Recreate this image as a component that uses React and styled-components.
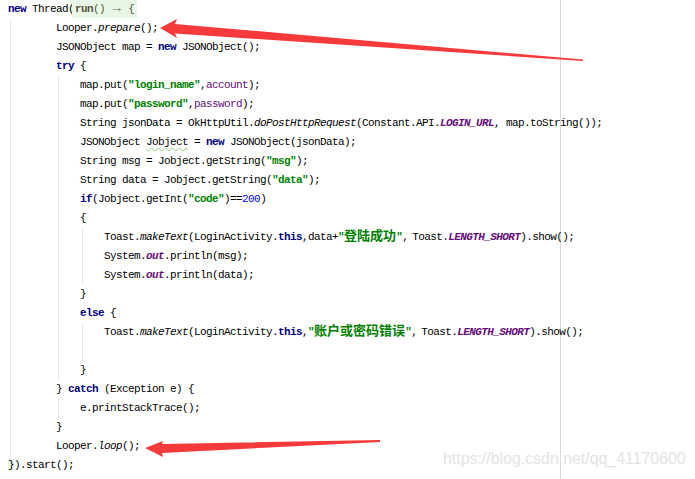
import React from "react";
import styled, { createGlobalStyle } from "styled-components";

const Global = createGlobalStyle`
  html, body {
    margin: 0;
    padding: 0;
    background: #fff;
  }
`;

const Editor = styled.div`
  position: relative;
  width: 695px;
  height: 479px;
  overflow: hidden;
  padding-left: 8px;
  box-sizing: border-box;
  font-family: "Liberation Mono", "DejaVu Sans Mono", monospace;
  font-size: 11px;
  letter-spacing: -0.6px;
  color: #000;
  background: linear-gradient(
    to right,
    transparent 560px,
    #dadada 560px,
    #dadada 561px,
    transparent 561px
  );
`;

const Line = styled.div`
  height: 19px;
  line-height: 19px;
  white-space: pre;
`;

// indent guide: grey rule to the left of a nested block
const Block = styled.div`
  margin-left: 2px;
  border-left: 1px solid #e6e6e6;
  padding-left: ${(p) => p.$pad}px;
`;

const K = styled.span`
  color: #000080;
  font-weight: bold;
`;
const S = styled.span`
  color: #008000;
  font-weight: bold;
`;
const Cjk = styled.span`
  font-family: "Noto Sans CJK SC", sans-serif;
  font-size: 13px;
  line-height: 1;
  letter-spacing: 0;
`;
const N = styled.span`
  color: #0000ff;
`;
const F = styled.span`
  color: #660e7a;
  font-weight: bold;
  font-style: italic;
`;
const P = styled.span`
  color: #660e7a;
`;
const I = styled.span`
  font-style: italic;
`;
const Gap = styled.span`
  margin-left: 4px;
`;
const Warn = styled.span`
  text-decoration: underline wavy #a8d8a0;
  text-underline-offset: 2px;
`;
const Fold = styled.span`
  display: inline-block;
  background: #e8f6e6;
  color: #55553a;
  padding: 0 3px 0 3px;
  margin-left: -2px;
  height: 18px;
  line-height: 19px;
  vertical-align: top;
  > b {
    font-weight: bold;
  }
`;
const Arrow = styled.span`
  display: inline-block;
  margin: 0 8px 0 8px;
  font-size: 13px;
  line-height: 1;
  color: #666;
`;
const Match = styled.span`
  background: #e8f6e6;
`;

const Overlay = styled.svg`
  position: absolute;
  left: 0;
  top: 0;
  pointer-events: none;
`;

const Watermark = styled.div`
  position: absolute;
  left: 443px;
  top: 450px;
  font-family: "Liberation Sans", Arial, sans-serif;
  font-size: 15.9px;
  letter-spacing: 0;
  color: #e3e3e3;
  white-space: nowrap;
`;

function Str({ children, cjk }) {
  return (
    <S>
      "{cjk ? <Cjk>{children}</Cjk> : children}"
    </S>
  );
}

export default function App() {
  return (
    <>
      <Global />
      <Editor>
        <Line>
          <K>new</K> Thread(
          <Fold>
            <b>run</b>()<Arrow>→</Arrow>{"{"}
          </Fold>
        </Line>
        <Block $pad={45}>
          <Line>
            Looper.<I>prepare</I>();
          </Line>
          <Line>
            JSONObject map = <K>new</K> JSONObject();
          </Line>
          <Line>
            <K>try</K> {"{"}
          </Line>
          <Block $pad={21}>
            <Line>
              map.put(<Str>login_name</Str>,<P>account</P>);
            </Line>
            <Line>
              map.put(<Str>password</Str>,<P>password</P>);
            </Line>
            <Line>
              String jsonData = OkHttpUtil.<I>doPostHttpRequest</I>(Constant.API.
              <F>LOGIN_URL</F>, map.toString());
            </Line>
            <Line>
              JSONObject <Warn>Jobject</Warn> = <K>new</K> JSONObject(jsonData);
            </Line>
            <Line>
              String msg = Jobject.getString(<Str>msg</Str>);
            </Line>
            <Line>
              String data = Jobject.getString(<Str>data</Str>);
            </Line>
            <Line>
              <K>if</K>(Jobject.getInt(<Str>code</Str>)==<N>200</N>)
            </Line>
            <Line>{"{"}</Line>
            <Block $pad={21}>
              <Line>
                Toast.<I>makeText</I>(LoginActivity.<K>this</K>,data+
                <Str cjk>登陆成功</Str>,<Gap />Toast.<F>LENGTH_SHORT</F>).show();
              </Line>
              <Line>
                System.<F>out</F>.println(msg);
              </Line>
              <Line>
                System.<F>out</F>.println(data);
              </Line>
            </Block>
            <Line>{"}"}</Line>
            <Line>
              <K>else</K> {"{"}
            </Line>
            <Block $pad={21}>
              <Line>
                Toast.<I>makeText</I>(LoginActivity.<K>this</K>,
                <Str cjk>账户或密码错误</Str>,<Gap />Toast.<F>LENGTH_SHORT</F>).show();
              </Line>
              <Line />
            </Block>
            <Line>{"}"}</Line>
          </Block>
          <Line>
            {"} "}
            <K>catch</K> (Exception e) {"{"}
          </Line>
          <Block $pad={21}>
            <Line>e.printStackTrace();</Line>
          </Block>
          <Line>{"}"}</Line>
          <Line>
            Looper.<I>loop</I>();
          </Line>
        </Block>
        <Line>
          <Match>{"}"}</Match>).start();
        </Line>

        <Overlay width="695" height="479" viewBox="0 0 695 479">
          <polygon
            fill="#f43a3a"
            points="160,28 177,19 175,24 583,59.5 583,61 175,33.5 177,38"
          />
          <polygon
            fill="#f43a3a"
            points="145,448 163,441 162,444 380,440 380,442 162,453 163,457"
          />
        </Overlay>
        <Watermark>https://blog.csdn.net/qq_41170600</Watermark>
      </Editor>
    </>
  );
}
